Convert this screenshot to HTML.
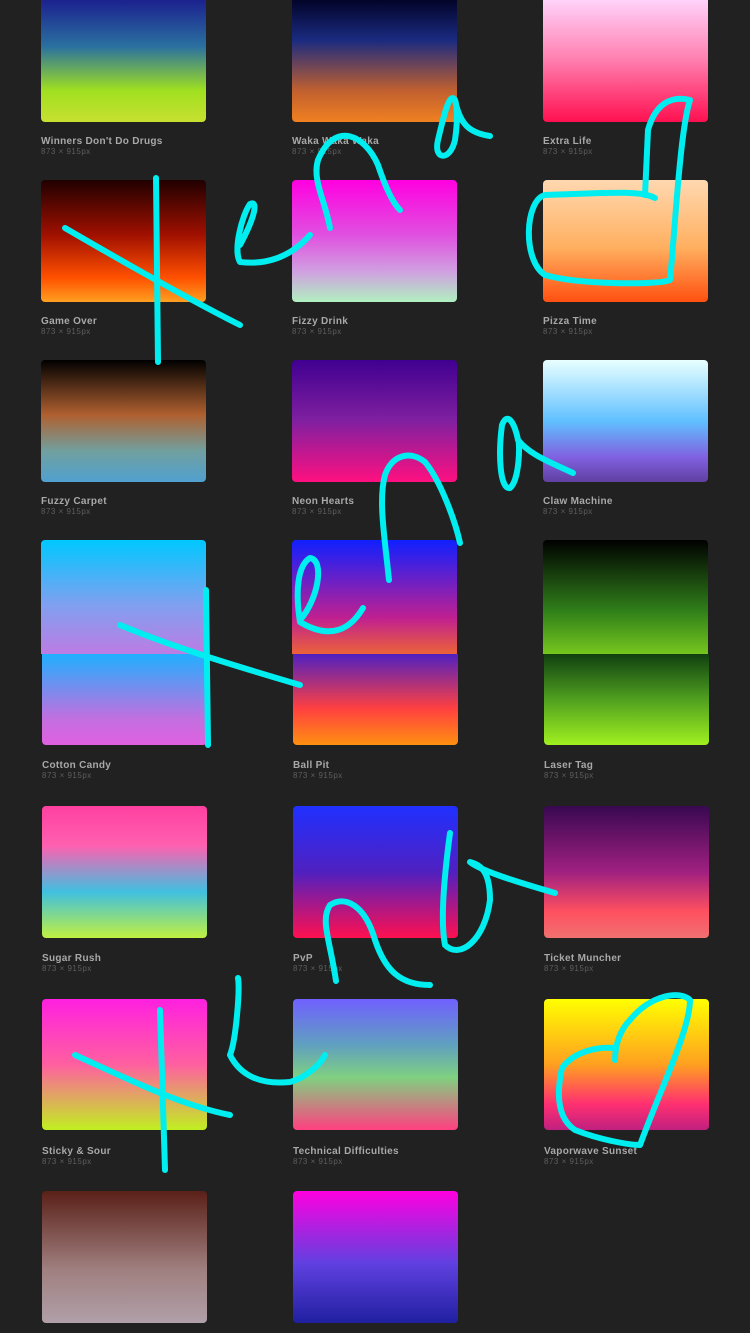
<!DOCTYPE html>
<html><head><meta charset="utf-8"><style>
*{margin:0;padding:0;box-sizing:border-box}
body{width:750px;height:1333px;background:#212121;position:relative;overflow:hidden;font-family:"Liberation Sans",Arial,sans-serif}
.t{position:absolute;border-radius:4px;width:165px}
.n{position:absolute;font-size:10px;font-weight:bold;color:#a8a8a8;letter-spacing:.3px}
.s{position:absolute;font-size:8px;color:#5e5e5e;letter-spacing:.5px}
svg{position:absolute;left:0;top:0}
</style></head><body>
<div class="t" style="left:41px;top:-4px;height:126px;background:linear-gradient(#1a1a8c,#2a70a0 40%,#a0e020 75%,#c8e030)"></div>
<div class="t" style="left:292px;top:-4px;height:126px;background:linear-gradient(#000020,#1a2a80 35%,#c06030 75%,#f08020)"></div>
<div class="t" style="left:543px;top:-4px;height:126px;background:linear-gradient(#ffd8ff,#ff80b0 50%,#ff1050)"></div>
<div class="n" style="left:41px;top:136px">Winners Don't Do Drugs</div><div class="s" style="left:41px;top:147px">873 × 915px</div>
<div class="n" style="left:292px;top:136px">Waka Waka Waka</div><div class="s" style="left:292px;top:147px">873 × 915px</div>
<div class="n" style="left:543px;top:136px">Extra Life</div><div class="s" style="left:543px;top:147px">873 × 915px</div>

<div class="t" style="left:41px;top:180px;height:122px;background:linear-gradient(#200000,#a01000 45%,#ff5000 80%,#ffa020)"></div>
<div class="t" style="left:292px;top:180px;height:122px;background:linear-gradient(#ff00e0,#e050e0 45%,#d0a0e0 75%,#b0f0c0)"></div>
<div class="t" style="left:543px;top:180px;height:122px;background:linear-gradient(#ffd8b0,#ffb060 55%,#ff5010)"></div>
<div class="n" style="left:41px;top:316px">Game Over</div><div class="s" style="left:41px;top:327px">873 × 915px</div>
<div class="n" style="left:292px;top:316px">Fizzy Drink</div><div class="s" style="left:292px;top:327px">873 × 915px</div>
<div class="n" style="left:543px;top:316px">Pizza Time</div><div class="s" style="left:543px;top:327px">873 × 915px</div>

<div class="t" style="left:41px;top:360px;height:122px;background:linear-gradient(#000,#b06030 45%,#70a0a0 75%,#50a0d0)"></div>
<div class="t" style="left:292px;top:360px;height:122px;background:linear-gradient(#400090,#8020a0 50%,#ff1080)"></div>
<div class="t" style="left:543px;top:360px;height:122px;background:linear-gradient(#e8ffff,#60c0ff 50%,#8060e0 80%,#6040a0)"></div>
<div class="n" style="left:41px;top:496px">Fuzzy Carpet</div><div class="s" style="left:41px;top:507px">873 × 915px</div>
<div class="n" style="left:292px;top:496px">Neon Hearts</div><div class="s" style="left:292px;top:507px">873 × 915px</div>
<div class="n" style="left:543px;top:496px">Claw Machine</div><div class="s" style="left:543px;top:507px">873 × 915px</div>

<div class="t" style="left:41px;top:540px;height:130px;background:linear-gradient(#00c8ff,#80a0f0 50%,#d070e0)"></div>
<div class="t" style="left:292px;top:540px;height:130px;background:linear-gradient(#1020ff,#c02090 60%,#ff8010)"></div>
<div class="t" style="left:543px;top:540px;height:130px;background:linear-gradient(#000,#30801a 55%,#90e020)"></div>

<div style="position:absolute;left:0;top:654px;width:750px;height:679px;background:#212121"></div>
<div class="t" style="left:42px;top:654px;height:91px;border-radius:0 0 4px 4px;background:linear-gradient(#20b0ff,#c070e0 70%,#e060e0)"></div>
<div class="t" style="left:293px;top:654px;height:91px;border-radius:0 0 4px 4px;background:linear-gradient(#5020c0,#ff4040 60%,#ff9010)"></div>
<div class="t" style="left:544px;top:654px;height:91px;border-radius:0 0 4px 4px;background:linear-gradient(#104010,#50a020 50%,#a0f020)"></div>
<div class="n" style="left:42px;top:760px">Cotton Candy</div><div class="s" style="left:42px;top:771px">873 × 915px</div>
<div class="n" style="left:293px;top:760px">Ball Pit</div><div class="s" style="left:293px;top:771px">873 × 915px</div>
<div class="n" style="left:544px;top:760px">Laser Tag</div><div class="s" style="left:544px;top:771px">873 × 915px</div>

<div class="t" style="left:42px;top:806px;height:132px;background:linear-gradient(#ff40a0,#ff60b0 30%,#40c0e0 65%,#c0f040)"></div>
<div class="t" style="left:293px;top:806px;height:132px;background:linear-gradient(#2030ff,#5020c0 50%,#ff1050)"></div>
<div class="t" style="left:544px;top:806px;height:132px;background:linear-gradient(#380850,#a02080 50%,#ff5060 80%,#f07070)"></div>
<div class="n" style="left:42px;top:953px">Sugar Rush</div><div class="s" style="left:42px;top:964px">873 × 915px</div>
<div class="n" style="left:293px;top:953px">PvP</div><div class="s" style="left:293px;top:964px">873 × 915px</div>
<div class="n" style="left:544px;top:953px">Ticket Muncher</div><div class="s" style="left:544px;top:964px">873 × 915px</div>

<div class="t" style="left:42px;top:999px;height:131px;background:linear-gradient(#ff20e0,#ff60a0 50%,#c0f020)"></div>
<div class="t" style="left:293px;top:999px;height:131px;background:linear-gradient(#7060ff,#60a0c0 35%,#80d080 60%,#ff4080)"></div>
<div class="t" style="left:544px;top:999px;height:131px;background:linear-gradient(#ffff00,#ffa020 50%,#ff3070 80%,#c02080)"></div>
<div class="n" style="left:42px;top:1146px">Sticky &amp; Sour</div><div class="s" style="left:42px;top:1157px">873 × 915px</div>
<div class="n" style="left:293px;top:1146px">Technical Difficulties</div><div class="s" style="left:293px;top:1157px">873 × 915px</div>
<div class="n" style="left:544px;top:1146px">Vaporwave Sunset</div><div class="s" style="left:544px;top:1157px">873 × 915px</div>

<div class="t" style="left:42px;top:1191px;height:132px;background:linear-gradient(#5a2018,#a08080 60%,#b0a0a8)"></div>
<div class="t" style="left:293px;top:1191px;height:132px;background:linear-gradient(#ff00e0,#6040e0 55%,#2020a0)"></div>

<svg width="750" height="1333" fill="none" stroke="#00eef0" stroke-width="6" stroke-linecap="round" stroke-linejoin="round">
<path d="M156,178 L158,362"/><path d="M65,228 C120,260 190,300 240,325"/>
<path d="M310,235 C290,258 265,265 240,262 C233,250 242,215 250,204 C258,200 256,215 240,245"/>
<path d="M330,228 C325,200 312,180 318,160 C335,120 365,135 378,165 C388,195 395,205 400,210"/>
<path d="M490,136 C470,133 460,125 455,100 C450,92 445,110 438,140 C433,160 450,162 455,140 C458,120 457,105 455,100"/>
<path d="M655,198 C640,190 610,193 545,195 C525,200 522,260 545,275 C580,285 660,285 670,280 C675,230 680,130 690,100 C670,95 655,105 648,130 L645,195"/>
<path d="M389,580 C385,540 378,500 385,475 C392,455 410,450 425,462 C440,480 455,520 460,543"/>
<path d="M363,608 C350,630 330,640 300,622 C295,590 298,565 310,558 C325,560 318,600 300,620"/>
<path d="M573,473 C550,462 530,455 518,440 C515,425 508,410 502,425 C498,455 500,490 510,488 C520,480 520,440 518,440"/>
<path d="M206,590 L208,745"/><path d="M120,625 C180,650 250,670 300,685"/>
<path d="M336,981 C330,940 320,920 330,905 C345,895 365,905 375,940 C385,970 400,985 430,985"/>
<path d="M450,833 C445,870 440,920 445,945 C460,960 485,940 490,900 C490,870 480,865 470,862 C480,870 510,880 555,893"/>
<path d="M238,978 C240,990 236,1040 230,1055 C240,1075 260,1085 290,1082 C305,1078 320,1065 325,1055"/>
<path d="M160,1010 L165,1170"/><path d="M75,1055 C130,1080 180,1105 230,1115"/>
<path d="M613,1048 C600,1047 575,1050 562,1068 C555,1100 560,1120 575,1130 C600,1140 630,1145 640,1145 C660,1090 690,1030 690,1000 C680,990 650,995 630,1020 C620,1030 615,1045 615,1060"/>
</svg>
</body></html>
